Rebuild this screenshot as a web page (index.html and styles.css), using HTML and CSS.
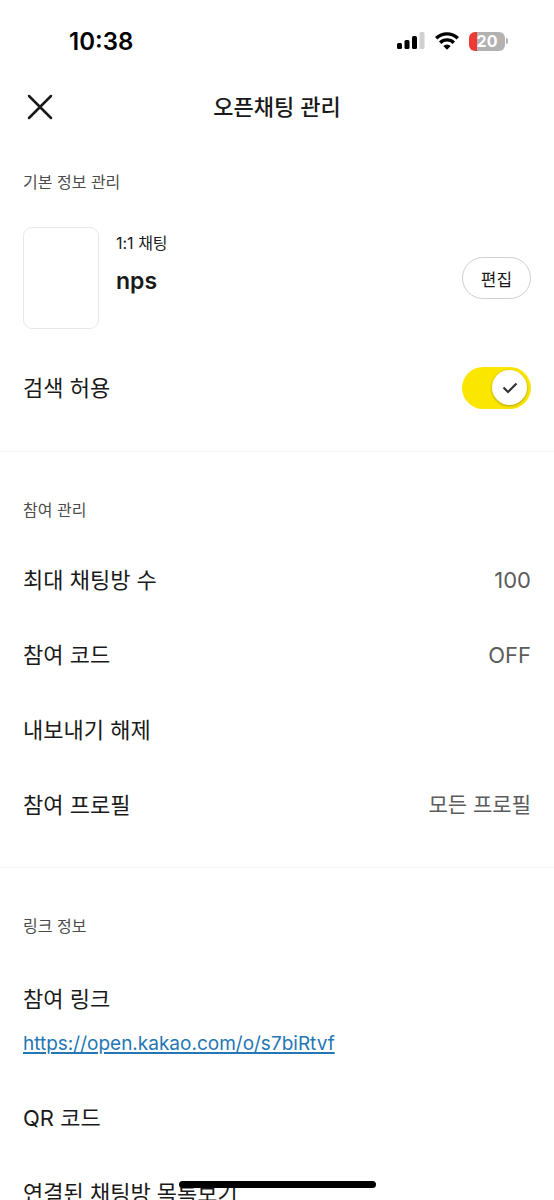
FILE: index.html
```html
<!DOCTYPE html>
<html lang="ko">
<head>
<meta charset="utf-8">
<meta name="viewport" content="width=device-width, initial-scale=1">
<title>오픈채팅 관리</title>
<link rel="stylesheet" href="styles.css">
</head>
<body>
<div class="app">
  <div class="status">
    <time class="status-time">10:38</time>
    <div class="status-icons">
      <svg class="signal" viewBox="0 0 28 18" aria-hidden="true">
        <rect x="0" y="11" width="5" height="6" rx="1.5"/>
        <rect x="7.5" y="8" width="5" height="9" rx="1.5"/>
        <rect x="15" y="4" width="5" height="13" rx="1.5"/>
        <rect x="22.5" y="0" width="5" height="17" rx="1.5" fill="#d0d0d0"/>
      </svg>
      <svg class="wifi" viewBox="0 0 24 18" aria-hidden="true">
        <g fill="none" stroke="#000" stroke-width="3.4">
          <path d="M1.2 6.3a15.4 15.4 0 0 1 21.6 0"/>
          <path d="M5.2 10.7a9.6 9.6 0 0 1 13.6 0"/>
        </g>
        <path d="M12 17.8l-3.700-3.800a5.3 5.3 0 0 1 7.400 0z"/>
      </svg>
      <div class="battery"><span class="battery-body">20</span><span class="battery-tip"></span></div>
    </div>
  </div>
  <header class="header">
    <button class="close" type="button" aria-label="닫기">
      <svg viewBox="0 0 26 26" aria-hidden="true"><path d="M2 2l22 22M24 2L2 24"/></svg>
    </button>
    <h1 class="title">오픈채팅 관리</h1>
  </header>
  <main class="content">
    <section class="section section-first">
      <h2 class="label">기본 정보 관리</h2>
      <div class="profile">
        <div class="cover"></div>
        <div class="profile-text">
          <p class="kind">1:1 채팅</p>
          <p class="name">nps</p>
        </div>
        <button class="edit" type="button">편집</button>
      </div>
      <div class="row">
        <label for="search">검색 허용</label>
        <span class="switch">
          <input id="search" class="switch-input" type="checkbox" role="switch" checked>
          <span class="knob"><svg viewBox="0 0 16 12" aria-hidden="true"><path d="M1.5 5.5l4.5 4.5 8.500-8.500"/></svg></span>
        </span>
      </div>
    </section>
    <section class="section">
      <h2 class="label">참여 관리</h2>
      <div class="rows">
        <div class="row"><span>최대 채팅방 수</span><span class="value value-latin">100</span></div>
        <div class="row"><span>참여 코드</span><span class="value value-latin">OFF</span></div>
        <div class="row"><span>내보내기 해제</span></div>
        <div class="row"><span>참여 프로필</span><span class="value">모든 프로필</span></div>
      </div>
    </section>
    <section class="section">
      <h2 class="label">링크 정보</h2>
      <div class="rows">
        <div class="link-block">
          <span>참여 링크</span>
          <a class="link" href="https://open.kakao.com/o/s7biRtvf">https://open.kakao.com/o/s7biRtvf</a>
        </div>
        <div class="row"><span>QR 코드</span></div>
        <div class="row"><span>연결된 채팅방 목록보기</span></div>
      </div>
    </section>
  </main>
  <div class="home-indicator"></div>
</div>
</body>
</html>
```
FILE: styles.css
```css
* { box-sizing: border-box; }

body {
  margin: 0;
  background: #fff;
  color: #1a1a1a;
  font-family: Inter, "Noto Sans CJK KR", sans-serif;
}

h1, h2, p { margin: 0; }

button {
  padding: 0;
  font: inherit;
  color: inherit;
  background: none;
  border: 0;
}

.app {
  display: flex;
  flex-direction: column;
  height: 100vh;
}

.status {
  flex: none;
  display: flex;
  justify-content: space-between;
  align-items: center;
  height: 82px;
  padding: 0 46px 0 69px;
}

.status-time {
  font-size: 24px;
  font-weight: 600;
  color: #000;
}

.status-icons {
  display: flex;
  align-items: center;
  gap: 10px;
}

.signal { width: 28px; height: 18px; }
.wifi { width: 24px; height: 18px; }

.battery {
  display: flex;
  align-items: center;
  gap: 1px;
}

.battery-body {
  width: 36px;
  height: 19px;
  border-radius: 6px;
  background: linear-gradient(to right, #ec3b34 8px, #b2b2b2 8px);
  color: #fff;
  font-size: 16px;
  font-weight: 700;
  line-height: 19px;
  text-align: center;
}

.battery-tip {
  width: 2px;
  height: 6px;
  border-radius: 0 2px 2px 0;
  background: #b2b2b2;
}

.header {
  flex: none;
  display: grid;
  grid-template-columns: 48px 1fr 48px;
  align-items: center;
  height: 50px;
  padding: 0 16px;
}

.close {
  display: grid;
  place-items: center;
  width: 48px;
  height: 48px;
}

.close svg {
  width: 26px;
  height: 26px;
  fill: none;
  stroke: #1a1a1a;
  stroke-width: 2.5;
  stroke-linecap: round;
}

.title {
  font-size: 22px;
  font-weight: 500;
  line-height: 32px;
  text-align: center;
}

.content {
  flex: 1;
  min-height: 0;
  overflow-y: auto;
  scrollbar-width: none;
}

.section {
  padding: 46px 23px 25px;
  border-bottom: 1px solid #f4f4f4;
}

.section-first {
  padding-top: 38px;
  padding-bottom: 26px;
}

.label {
  font-size: 16px;
  font-weight: 400;
  line-height: 24px;
  color: #4c4c4c;
}

.profile {
  display: flex;
  align-items: center;
  gap: 17px;
  margin: 33px 0 21px;
}

.cover {
  width: 76px;
  height: 102px;
  border: 1px solid #e8e8e8;
  border-radius: 9px;
}

.profile-text {
  flex: 1;
  align-self: flex-start;
  padding-top: 4px;
}

.kind {
  font-size: 16px;
  line-height: 24px;
}

.name {
  margin-top: 10px;
  font-size: 23px;
  font-weight: 600;
  line-height: 32px;
}

.edit {
  width: 69px;
  height: 42px;
  border: 1px solid #d0d0d0;
  border-radius: 21px;
  font-size: 17px;
}

.rows { margin-top: 20px; }

.row {
  display: flex;
  justify-content: space-between;
  align-items: center;
  height: 75px;
  font-size: 22px;
  line-height: 32px;
}

.value {
  font-size: 21px;
  color: #5c5c5c;
}

.value-latin { font-size: 22px; }

.switch {
  display: grid;
  align-items: center;
  justify-items: end;
}

.switch-input {
  grid-area: 1 / 1;
  appearance: none;
  width: 69px;
  height: 42px;
  margin: 0;
  border-radius: 21px;
  background: #fbe600;
}

.knob {
  grid-area: 1 / 1;
  display: grid;
  place-items: center;
  width: 35px;
  height: 35px;
  margin-right: 4px;
  border-radius: 50%;
  background: #fff;
  box-shadow: 0 1px 3px rgba(0, 0, 0, 0.3);
  pointer-events: none;
  z-index: 1;
}

.knob svg {
  width: 16px;
  height: 12px;
  fill: none;
  stroke: #333;
  stroke-width: 2.2;
}

.link-block {
  display: flex;
  flex-direction: column;
  align-items: flex-start;
  gap: 17px;
  padding: 25px 0 24px;
  font-size: 22px;
  line-height: 32px;
}

.link {
  font-size: 19px;
  line-height: 24px;
  color: #2476b4;
  text-decoration-thickness: 2px;
  text-underline-offset: 2px;
}

.home-indicator {
  position: fixed;
  bottom: 12px;
  left: 50%;
  width: 197px;
  height: 7px;
  margin-left: -98px;
  border-radius: 4px;
  background: #000;
}
```
